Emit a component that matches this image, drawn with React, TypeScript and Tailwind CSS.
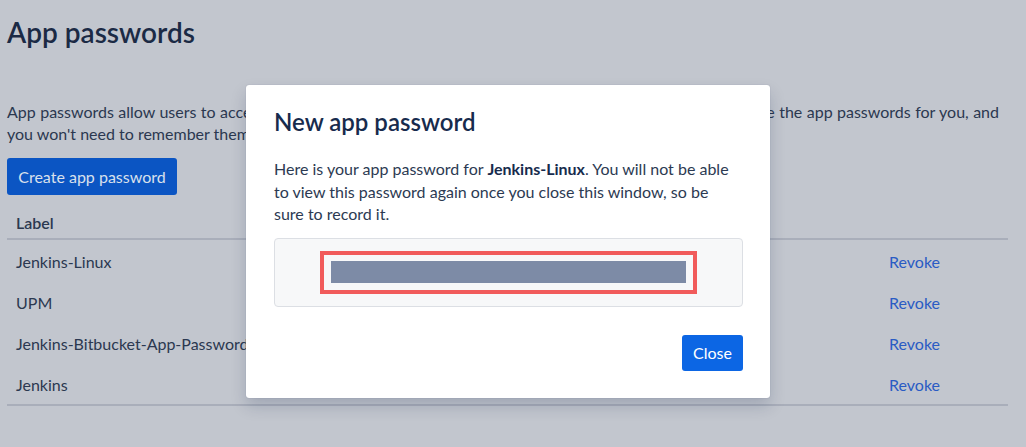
import React from 'react';

const rows = ['Jenkins-Linux', 'UPM', 'Jenkins-Bitbucket-App-Password', 'Jenkins'];

export default function App() {
  return (
    <div className="relative w-[1026px] h-[447px] overflow-hidden bg-[#c2c6ce] font-['Lato','Liberation_Sans',sans-serif]">
      {/* page behind the blanket */}
      <main className="w-[992px] ml-[7px]">
        <h1 className="pt-[15px] text-[28px] leading-[34px] font-semibold text-[#1b2a45]">App passwords</h1>

        <p className="mt-[52px] text-[16px] leading-[22px] text-[#2b3850]">
          <span className="block whitespace-nowrap [text-align-last:justify] [word-spacing:-2px]">
            App passwords allow users to access your Bitbucket account through apps such as Sourcetree. We'll generate the app passwords for you, and
          </span>
          <span className="block whitespace-nowrap">you won't need to remember them.</span>
        </p>

        <button className="mt-[13px] h-[37px] w-[170px] rounded-[3px] bg-[#0b55c3] text-[16px] text-[#d9e0ec]">
          Create app password
        </button>

        <div className="w-[1001px] text-[16px] leading-[22px] text-[#2b3850]">
          <div className="border-b-2 border-[#a9aeba] pl-[9px] pt-[17px] pb-[4px] font-semibold">Label</div>
          <div className="border-b-2 border-[#a9aeba]">
            {rows.map((r) => (
              <div key={r} className="grid h-[41px] grid-cols-[882px_1fr] pt-[11px]">
                <span className="pl-[9px]">{r}</span>
                <span className="text-[#2a5bc4]">Revoke</span>
              </div>
            ))}
          </div>
        </div>
      </main>

      {/* modal dialog */}
      <div className="absolute left-[246px] top-[85px] w-[524px] h-[313px] rounded-[3px] bg-white px-[28px] pt-[21px] shadow-[0_8px_16px_rgba(9,30,66,0.18),0_0_1px_rgba(9,30,66,0.3)]">
        <h2 className="text-[24px] leading-[32px] font-semibold text-[#172b4d]">New app password</h2>
        <p className="mt-[20px] text-[16px] leading-[22.5px] text-[#2c3a52]">
          <span className="whitespace-nowrap">Here is your app password for <b className="font-bold text-[#172b4d]">Jenkins-Linux</b>. You will not be able</span>
          <br />
          <span className="whitespace-nowrap">to view this password again once you close this window, so be</span>
          <br />
          sure to record it.
        </p>
        <div className="mt-[12px] h-[69px] w-[469px] flex items-center justify-center rounded-[4px] border border-[#dcdfe4] bg-[#f7f8f9]">
          <div className="w-[377px] h-[43px] border-4 border-[#f15b5b] px-[7px] pt-[6px]">
            <div className="h-[22px] bg-[#7d8ba6]" />
          </div>
        </div>
        <div className="mt-[28px] flex justify-end w-[469px]">
          <button className="h-[36px] w-[61px] rounded-[3px] bg-[#0c66e4] text-[16px] text-white">Close</button>
        </div>
      </div>
    </div>
  );
}
